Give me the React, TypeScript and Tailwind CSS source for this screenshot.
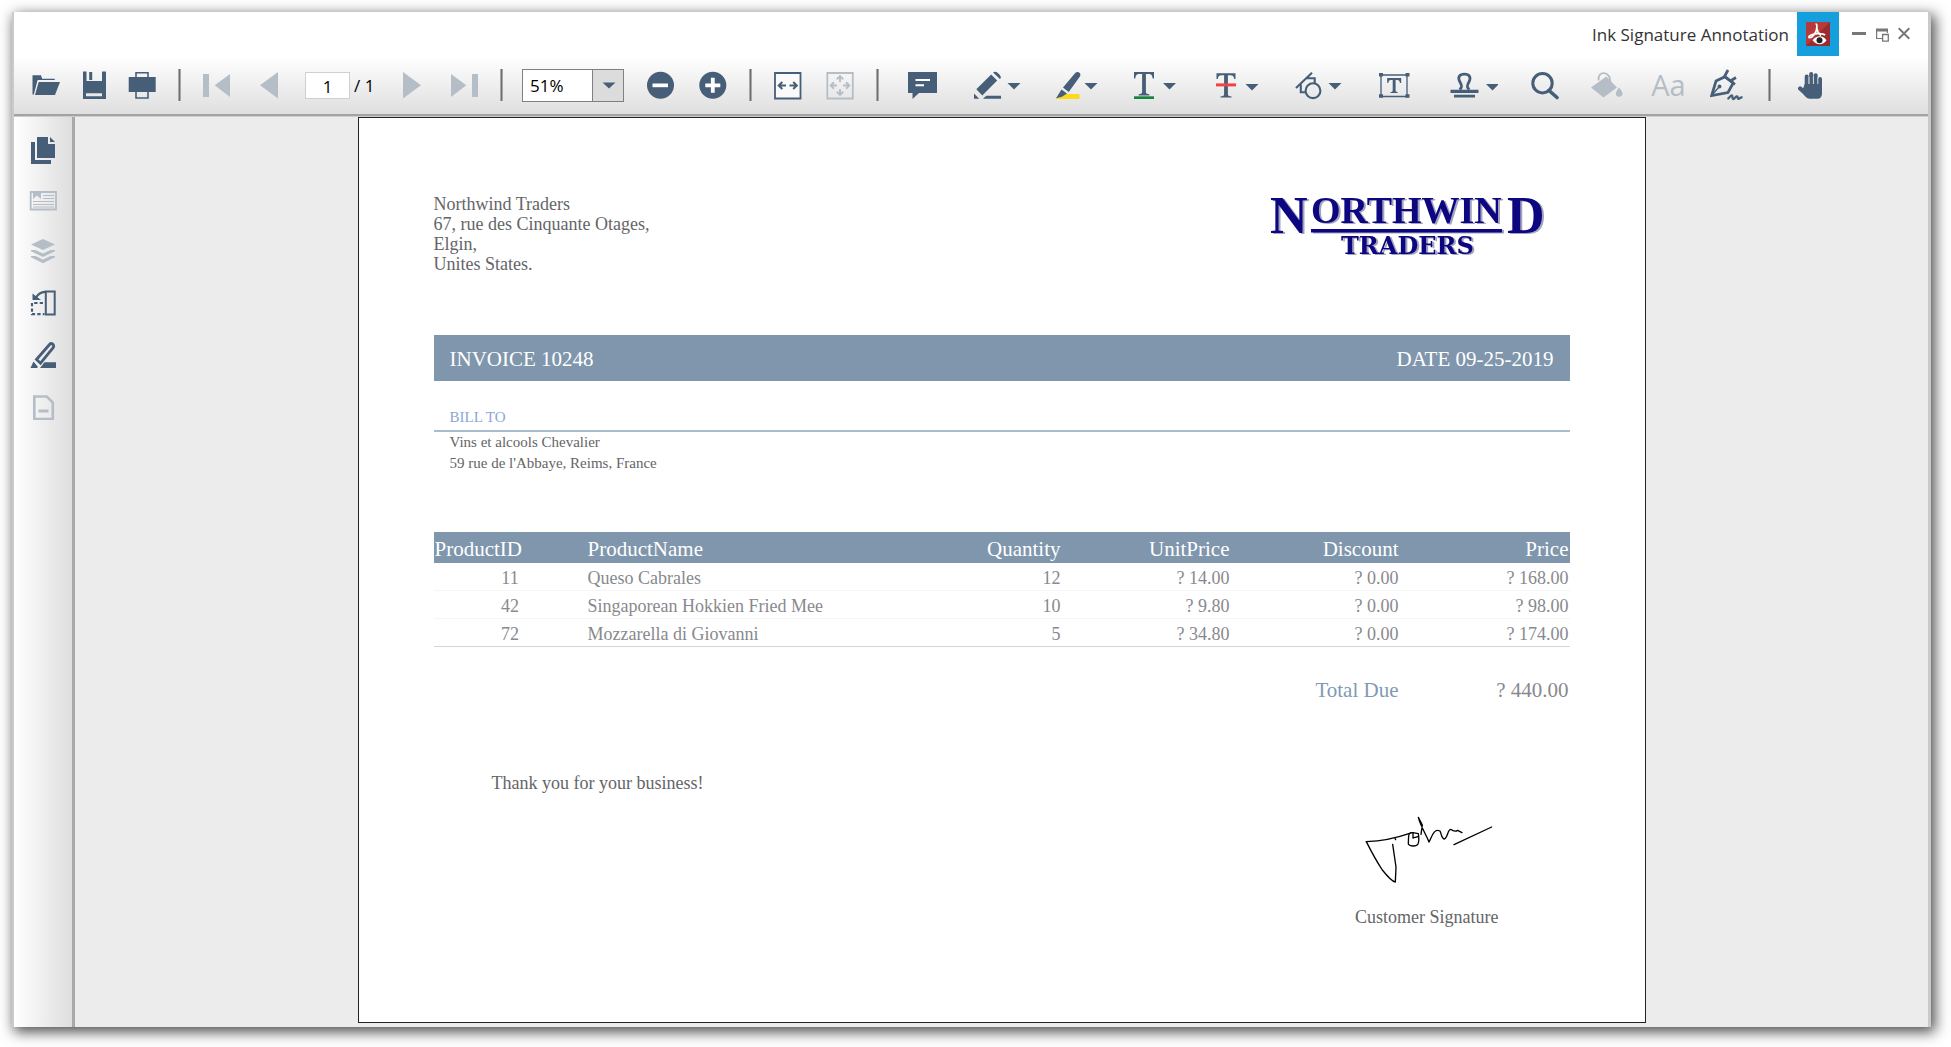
import React, { ReactNode } from "react";

const INK = "#465e77";
const MUTED = "#b5bec6";

type ToolProps = { label: string; w: number; className: string; disabled?: boolean; children: ReactNode };

function Tool({ label, w, className, disabled, children }: ToolProps) {
  return (
    <button
      type="button"
      aria-label={label}
      title={label}
      disabled={disabled}
      className={`block shrink-0 ${disabled ? "text-[#b5bec6]" : "text-[#465e77]"} ${className}`}
    >
      <svg width={w} height="32" viewBox={`0 0 ${w} 32`} fill="currentColor" aria-hidden="true" className="block">
        {children}
      </svg>
    </button>
  );
}

function Separator({ className }: { className: string }) {
  return <div className={`h-8 w-[3px] shrink-0 border-x border-x-[#a8a8a8] bg-[#707070] ${className}`} />;
}

function Caret({ x, y = 14 }: { x: number; y?: number }) {
  return <path d={`M${x} ${y}h13l-6.5 6.5z`} />;
}

function Toolbar() {
  return (
    <div
      role="toolbar"
      aria-label="Document tools"
      className="flex h-[58px] items-center bg-linear-to-b from-white to-[#dfdfdf] pl-[18px]"
    >
      <Tool label="Open" w={28} className="">
        <path d="M.5 6.3H9l1.2 3.5h12.5V11H5.6L1.8 25.5H.5z" />
        <path d="M6.7 13H28l-5 13H3z" />
      </Tool>
      <Tool label="Save" w={23} className="ml-[23px]">
        <path d="M0 2.5h3.5V12H19V2.5h4V30H0zM3 24.3v3h16v-3z" fillRule="evenodd" />
        <path d="M6.2 3h3v8h-3z" />
      </Tool>
      <Tool label="Print" w={28} className="ml-[22px]">
        <path d="M.7 8h27v15h-27z" />
        <path d="M8 8V3.7h12V8M8 23v6h12v-6" fill="none" stroke="currentColor" strokeWidth="1.6" />
      </Tool>
      <Separator className="ml-[22px]" />
      <Tool label="First page" w={27} className="ml-[22px]" disabled>
        <path d="M0 5h6v23H0zM27 5v23L11.7 16.3z" />
      </Tool>
      <Tool label="Previous page" w={18} className="ml-[30px]" disabled>
        <path d="M18 3v26.5L0 16.2z" />
      </Tool>
      <input
        aria-label="Current page"
        defaultValue="1"
        className="ml-[27px] h-[27px] w-[45px] shrink-0 border border-[#cfcfcf] bg-white pt-0.5 text-center font-['Open_Sans',sans-serif] text-[17px] text-black outline-none"
      />
      <span className="ml-1 w-[22px] shrink-0 whitespace-nowrap pt-0.5 font-['Open_Sans',sans-serif] text-[17px] text-black">/ 1</span>
      <Tool label="Next page" w={18} className="ml-[27px]" disabled>
        <path d="M0 3v26.5l18-13.3z" />
      </Tool>
      <Tool label="Last page" w={27} className="ml-[30px]" disabled>
        <path d="M21 5h6v23h-6zM0 5v23l15.3-11.7z" />
      </Tool>
      <Separator className="ml-[22px]" />
      <div className="relative ml-[19px] h-[33px] w-[102px] shrink-0">
        <select
          aria-label="Zoom level"
          defaultValue="51"
          className="h-full w-full appearance-none border border-[#808080] bg-linear-to-r from-white from-[70px] to-[#dcdcdc] to-[70px] pt-0.5 pl-[7px] font-['Open_Sans',sans-serif] text-[17px] text-black outline-none"
        >
          <option value="51">51%</option>
          <option value="100">100%</option>
        </select>
        <svg
          className="pointer-events-none absolute top-0 right-0"
          width="32"
          height="33"
          viewBox="0 0 32 33"
          aria-hidden="true"
        >
          <path d="M.5 0v33" stroke="#808080" />
          <path d="M10.5 13.5h13L17 19.5z" fill={INK} />
        </svg>
      </div>
      <Tool label="Zoom out" w={28} className="ml-[23px]">
        <circle cx="13.5" cy="16.3" r="13.5" />
        <path d="M5.5 14.5h15.5v3.7H5.5z" fill="#fff" />
      </Tool>
      <Tool label="Zoom in" w={28} className="ml-6">
        <circle cx="13.8" cy="16.3" r="13.5" />
        <path d="M11.9 8.8h3.8v5.6h5.6v3.8h-5.6v5.6h-3.8v-5.6H6.3v-3.8h5.6z" fill="#fff" />
      </Tool>
      <Separator className="ml-[22px]" />
      <Tool label="Fit width" w={28} className="ml-[22px]">
        <path d="M1 4h25.5v25.5H1z" fill="#fafafa" stroke="currentColor" strokeWidth="1.8" />
        <path d="M4.5 16.5H12M8.3 13l-3.6 3.5L8.3 20M23 16.5h-7.5M19.2 13l3.6 3.5-3.6 3.5" fill="none" stroke="currentColor" strokeWidth="2" />
      </Tool>
      <Tool label="Fit page" w={28} className="ml-6" disabled>
        <path d="M1.3 4h25.5v25.5H1.3z" fill="none" stroke="currentColor" strokeWidth="1.8" />
        <path d="M4.5 16.5H11M8 13.3l-3.3 3.2L8 19.7M23.5 16.5H17M20 13.3l3.3 3.2-3.3 3.2M14 7v6M10.8 10.3L14 7l3.2 3.3M14 26v-6M10.8 22.7L14 26l3.2-3.3" fill="none" stroke="currentColor" strokeWidth="1.9" />
      </Tool>
      <Separator className="ml-[22px]" />
      <Tool label="Sticky note" w={29} className="ml-[29px]">
        <path d="M0 3h29v21H11l-6.5 6V24H0z" />
        <path d="M7.5 10h14.5v2H7.5zM7.5 15.3h8.5v2H7.5z" fill="#fff" />
      </Tool>
      <Tool label="Ink" w={47} className="ml-[37px]">
        <path d="M2.3 20.3L17.2 5.4l6 6L8.3 26.5zM0 24.5L5.2 29.8H0zM19 3.6l1.3-.7c1.6-.7 2.8.3 4.3 1.8s2.6 2.8 2.2 4.3L25.9 10zM10.5 28.3l2-1.5H27v3H9z" />
        <Caret x={33.5} />
      </Tool>
      <Tool label="Highlight" w={43} className="ml-[34px]">
        <path d="M7 25h17.5v5H0z" fill="#fcd91c" />
        <path d="M8 18.5L20 4.3c1.4-1.6 3.3-1.7 4.5-.6 1.3 1.2 1.2 2.9-.1 4.5L13.7 23zM6.5 20.5l5.5 4-5 3.3-6 1.5z" />
        <Caret x={29.5} />
      </Tool>
      <Tool label="Underline" w={43} className="ml-9">
        <path d="M0 3h20v6.5h-1.3c-.6-3.3-1.4-4.4-4-4.4h-2.8v18c0 1.6.8 2 3.5 2.1v1.3H4.6v-1.3c2.7-.1 3.5-.5 3.5-2.1v-18H5.3c-2.6 0-3.4 1.1-4 4.4H0z" />
        <path d="M0 27.3h20V30H0z" fill="#16863f" />
        <Caret x={29} />
      </Tool>
      <Tool label="Strikethrough" w={43} className="ml-[39px]">
        <path d="M.5 4.2h19V10h-1.3c-.5-2.8-1.3-3.8-3.8-3.8h-2.5v19c0 1.6.8 2 3.5 2.1v1.3H4.6v-1.3c2.7-.1 3.5-.5 3.5-2.1v-19H5.6c-2.5 0-3.3 1-3.8 3.8H.5z" />
        <path d="M0 14.4h20v3H0z" fill="#f04245" />
        <Caret x={29.5} y={15} />
      </Tool>
      <Tool label="Shapes" w={47} className="ml-9">
        <g fill="none" stroke="currentColor" strokeWidth="2.1">
          <circle cx="18" cy="21.7" r="7.4" />
          <path d="M1 19L17 3.8M5.8 15.5v7.7h4.7M11.5 9.2h8.2v5.2" />
        </g>
        <Caret x={33.5} />
      </Tool>
      <Tool label="Text box" w={32} className="ml-9">
        <path d="M3 6h26v21.5H3z" fill="none" stroke="currentColor" strokeWidth="1.3" />
        <path d="M1 4h4v3.6H1zM27.5 4h4v3.6h-4zM1 25.3h4v3.4H1zM27.5 25.3h4v3.4h-4zM9.2 9h14v5H22c-.4-2.3-.9-3.1-2.7-3.1h-1.7v10.6c0 1.1.6 1.4 2 1.5v1h-7v-1c1.5-.1 2.1-.4 2.1-1.5V10.9h-1.8c-1.8 0-2.2.8-2.6 3.1H9.2z" />
      </Tool>
      <Tool label="Stamp" w={48} className="ml-10">
        <path d="M9.5 20.5c3.2-2 2.3-4.3.6-7.2C7 8 9.7 5.2 14.4 5.2s7.3 2.8 4.4 8.1c-1.7 2.900-2.6 5.200.6 7.200" fill="none" stroke="currentColor" strokeWidth="2.8" />
        <path d="M.5 20.800h28v3.200H.5zM4 25.700h21v2.800H4z" />
        <Caret x={36} y={15} />
      </Tool>
      <Tool label="Search" w={28} className="ml-[33px]">
        <path d="M11.500 4.500a9.700 9.700 0 100 19.400 9.700 9.700 0 000-19.400z" fill="none" stroke="currentColor" strokeWidth="3" />
        <path d="M18 21.500l8 7" stroke="currentColor" strokeWidth="3.6" strokeLinecap="round" />
      </Tool>
      <Tool label="Fill" w={32} className="ml-8" disabled>
        <path d="M0 18.500L15.300 7.500 26 18.500 12.500 28.500zM28 18.500c2.500 3.200 3.500 4.800 3.500 6a3.300 3.300 0 01-6.600 0c0-1.200.8-2.800 3.100-6z" />
        <path d="M7.500 11.500C7 6 10 4 13 4.200c4 .3 6.500 4 6.500 11" fill="none" stroke="currentColor" strokeWidth="1.8" />
      </Tool>
      <button
        type="button"
        disabled
        aria-label="Font"
        className="ml-7 w-[35px] shrink-0 whitespace-nowrap font-['Open_Sans',sans-serif] text-[29px] leading-8 text-[#b5bec6]"
      >
        Aa
      </button>
      <Tool label="Signature" w={33} className="ml-6">
        <g fill="none" stroke="currentColor" strokeWidth="2.7">
          <path d="M1.700 26.500L6 12l9-4.300 8.200 6.300-5.200 9.500z" />
          <path d="M13.800 7l11.200 8.500M14.500 7.500L18 1M19.500 12.500l6.500-4" />
          <path d="M2 26l7-8" strokeWidth="1.4" />
          <path d="M17.500 30c2-1 3-3.800 4.300-3.600 1.500.3-.2 3.400 1.300 3.600 1.700.2 2.400-3.200 3.900-2.600 1.300.5.1 2.200 1.300 2.400 1.400.2 1.700-1.800 4.200-1.300" strokeWidth="2.3" />
        </g>
        <circle cx="9.500" cy="17.500" r="1.9" />
      </Tool>
      <Separator className="ml-[25px]" />
      <Tool label="Pan" w={24} className="ml-[27px]">
        <g fill="none" stroke="currentColor" strokeWidth="4" strokeLinecap="round">
          <path d="M8.700 18V7.500M13.200 16V5M17.700 16V6.200M22 20V10" />
          <path d="M2.200 19.500l6 5.500" strokeWidth="4.400" />
        </g>
        <path d="M6.700 15h17.300v9c0 4-1.800 5.800-5 5.800h-7c-2.500 0-3.600-1-5.500-3.200L4 22.500z" />
        <path d="M11 8v7M15.400 7v8M19.900 8v7" stroke="#f0f0f0" strokeWidth=".7" />
      </Tool>
    </div>
  );
}

function TitleBar() {
  return (
    <header className="flex h-11 items-center justify-end bg-white pr-[18px]">
      <h1 className="pt-0.5 font-['Open_Sans',sans-serif] text-[17px] text-[#333]">Ink Signature Annotation</h1>
      <div className="ml-2 flex h-11 w-[42px] items-center justify-center bg-[#169fdd]">
        <svg width="24" height="24" viewBox="0 0 24 24" aria-hidden="true">
          <path d="M0 0h24v24H0z" fill="#b73a3a" />
          <path d="M24 0v24H0z" fill="#9b2c2d" />
          <g fill="none" stroke="#fff" strokeWidth="1.7">
            <path d="M9.500 2c2 0 1.300 2 1.200 4.500C10.500 10 6.500 16.500 3 15.500c-1-2 4-3.500 8-3.800 3-.2 7 .3 8 1.500" />
            <path d="M10.700 6c.5 3.500 2.300 6 4.300 7.500" />
          </g>
          <path d="M6.500 18.300c4-5.300 10.500-5.300 14 0-3.500 5.300-10 5.300-14 0z" fill="#fff" />
          <circle cx="13.500" cy="18.300" r="3" fill="#222" />
        </svg>
      </div>
      <button type="button" aria-label="Minimize" className="ml-[13px] text-[#777]">
        <svg width="14" height="16" viewBox="0 0 14 16" className="block" aria-hidden="true">
          <path d="M0 6h14v3H0z" fill="currentColor" />
        </svg>
      </button>
      <button type="button" aria-label="Restore" className="ml-2.5 text-[#777]">
        <svg width="13" height="16" viewBox="0 0 13 16" className="block" fill="none" stroke="currentColor" aria-hidden="true">
          <path d="M6 12.500H.6V3.500h10.800V7" strokeWidth="1.2" />
          <path d="M0 4h12" strokeWidth="3" />
          <path d="M6.600 8.500h5.700v6.700H6.600z" strokeWidth="1.3" />
        </svg>
      </button>
      <button type="button" aria-label="Close" className="ml-[9px] text-[#777]">
        <svg width="12" height="16" viewBox="0 0 12 16" className="block" fill="none" stroke="currentColor" strokeWidth="2" aria-hidden="true">
          <path d="M.7 2.200l10.600 10.600M11.300 2.200L.7 12.800" />
        </svg>
      </button>
    </header>
  );
}

const panels: { label: string; color: string; icon: ReactNode }[] = [
  {
    label: "Page thumbnails",
    color: INK,
    icon: (
      <>
        <path d="M2 5h4v18h16v4H2z" />
        <path d="M8 0h11v7h7v14H8z" />
        <path d="M21 0l5 5h-5z" />
      </>
    ),
  },
  {
    label: "Bookmarks",
    color: MUTED,
    icon: (
      <>
        <path d="M1.700 4h25.300v17.500H1.700z" fill="none" stroke="currentColor" strokeWidth="1.8" />
        <path d="M4 3h8v8L8 7.500 4 11z" />
        <path d="M14 7.500h11M14 10.500h11M4 13.500h21M4 16.500h21M4 19h21" stroke="currentColor" strokeWidth="1" />
      </>
    ),
  },
  {
    label: "Layers",
    color: MUTED,
    icon: (
      <>
        <path d="M2 5.500L14 0l12 5.500L14 11z" />
        <path d="M2 11h4.500l7.500 3.500 7.500-3.500H26v1.200L14 18 2 12.200zM2 17h4.500l7.500 3.500 7.500-3.500H26v1.200L14 24.200 2 18.200z" />
      </>
    ),
  },
  {
    label: "Organize pages",
    color: INK,
    icon: (
      <>
        <path d="M16.800 1.500h8.900v23h-8.900z" fill="none" stroke="currentColor" strokeWidth="2" />
        <path d="M14 13H3v11.200h12.500" fill="none" stroke="currentColor" strokeWidth="2.2" strokeDasharray="3.300 2.200" />
        <path d="M3.500 3.500L12 10H3.500z" />
        <path d="M7 7.500c2-3.500 5-5.500 9-5.700" fill="none" stroke="currentColor" strokeWidth="2.2" />
      </>
    ),
  },
  {
    label: "Annotations",
    color: INK,
    icon: (
      <>
        <path d="M7.500 18.500L20.500 3.500c1-1.100 2.400-1 3.400-.1s1.100 2.300.1 3.400L11.500 22.200z" fill="none" stroke="currentColor" strokeWidth="2.8" />
        <path d="M4.500 20.500l4.500 5.500-1 1H1.500zM15.500 21.300H27V27H11z" />
      </>
    ),
  },
  {
    label: "Redaction",
    color: MUTED,
    icon: (
      <>
        <path d="M5.300 4.500h12.500l6 6v16.500H5.300z" fill="none" stroke="currentColor" strokeWidth="2.6" />
        <path d="M9.500 17.500h10v3h-10z" />
      </>
    ),
  },
];

function SideBar() {
  return (
    <nav
      aria-label="Panels"
      className="flex w-[61px] shrink-0 flex-col gap-[23px] border-r-3 border-r-[#a9a9a9] bg-linear-to-r from-white to-[#dedede] pt-5 pl-[15px]"
    >
      {panels.map((p) => (
        <button key={p.label} type="button" aria-label={p.label} title={p.label} className="block size-7">
          <svg width="28" height="28" viewBox="0 0 28 28" fill="currentColor" color={p.color} className="block" aria-hidden="true">
            {p.icon}
          </svg>
        </button>
      ))}
    </nav>
  );
}

function Logo() {
  return (
    <svg
      width="292"
      height="92"
      viewBox="0 -20 292 92"
      role="img"
      aria-label="Northwind Traders"
      className="-mt-5 drop-shadow-[2px_1px_0_#a3a3bd]"
    >
      <g fill="#0c0680" fontFamily="'Liberation Serif', serif" fontWeight="700">
        <text x="2" y="39" fontSize="52">N</text>
        <text x="43" y="29" fontSize="38">ORTHWIN</text>
        <text x="239" y="39" fontSize="52">D</text>
        <text x="73" y="60" fontSize="24" fontFamily="'DejaVu Serif', serif">TRADERS</text>
      </g>
      <path d="M43 35h191v3.500H43z" fill="#0c0680" />
    </svg>
  );
}

const rows = [
  ["11", "Queso Cabrales", "12", "? 14.00", "? 0.00", "? 168.00"],
  ["42", "Singaporean Hokkien Fried Mee", "10", "? 9.80", "? 0.00", "? 98.00"],
  ["72", "Mozzarella di Giovanni", "5", "? 34.80", "? 0.00", "? 174.00"],
];

function Invoice() {
  return (
    <article className="mb-1 w-full max-w-[1288px] flex-1 border border-[#222] bg-white px-[75px] pt-[76px] font-['Liberation_Serif',serif] text-lg text-[#646567]">
      <div className="flex h-20 items-start justify-between">
        <address className="leading-5 not-italic">
          Northwind Traders
          <br />
          67, rue des Cinquante Otages,
          <br />
          Elgin,
          <br />
          Unites States.
        </address>
        <div className="mr-2.5">
          <Logo />
        </div>
      </div>

      <div className="mt-[61px] flex h-[46px] items-center justify-between bg-[#7f96ad] px-4 pt-0.5 text-[21px] text-white">
        <h2>INVOICE 10248</h2>
        <p>DATE 09-25-2019</p>
      </div>

      <section className="text-[15px]">
        <h3 className="border-b-2 border-[#a9bccd] px-4 pt-[26px] pb-[3px] leading-5 text-[#8ba6d6]">BILL TO</h3>
        <p className="px-4 leading-[21px]">
          Vins et alcools Chevalier
          <br />
          59 rue de l'Abbaye, Reims, France
        </p>
      </section>

      <table className="mt-[58px] w-full table-fixed border-separate border-spacing-0 text-right text-[#88898e]">
        <colgroup>
          <col className="w-[153px]" />
          <col />
          <col className="w-[169px]" />
          <col className="w-[169px]" />
          <col className="w-[169px]" />
          <col className="w-[170px]" />
        </colgroup>
        <thead className="bg-[#7f96ad] text-[21px] text-white">
          <tr className="h-[31px] leading-7">
            <th scope="col" className="px-px pt-[3px] text-left font-normal">ProductID</th>
            <th scope="col" className="px-px pt-[3px] text-left font-normal">ProductName</th>
            <th scope="col" className="px-px pt-[3px] font-normal">Quantity</th>
            <th scope="col" className="px-px pt-[3px] font-normal">UnitPrice</th>
            <th scope="col" className="px-px pt-[3px] font-normal">Discount</th>
            <th scope="col" className="px-px pt-[3px] font-normal">Price</th>
          </tr>
        </thead>
        <tbody>
          {rows.map((r, i) => (
            <tr key={r[0]} className="h-[27px] leading-6">
              {r.map((cell, j) => (
                <td
                  key={j}
                  className={`border-b px-px pt-[3px] ${i === rows.length - 1 ? "border-[#d4d5d6]" : "border-[#f6f6f6]"} ${
                    j === 0 ? "text-center" : j === 1 ? "text-left" : "text-right"
                  }`}
                >
                  {cell}
                </td>
              ))}
            </tr>
          ))}
        </tbody>
        <tfoot>
          <tr className="h-[86px] text-[21px]">
            <th scope="row" colSpan={5} className="px-px font-normal text-[#7f9ab3]">Total Due</th>
            <td className="px-px">? 440.00</td>
          </tr>
        </tfoot>
      </table>

      <p className="mt-[38px] pl-[58px] leading-6">Thank you for your business!</p>

      <div className="mt-5 flex justify-end pr-[71px]">
        <figure className="flex flex-col items-center">
          <svg
            width="130"
            height="69"
            viewBox="75 50 390 207"
            fill="none"
            stroke="#000"
            strokeWidth="4"
            strokeLinecap="round"
            strokeLinejoin="round"
            role="img"
            aria-label="Signature of John"
            className="ml-1"
          >
            <path d="M82 130C130 128 175 118 212 105l5-2M170 124l-2-5" />
            <path d="M82 130c12 24 28 55 48 85 16 20 30 35 39 36l2-45-10-68" />
            <path d="M222 103c-15-1-13 5-14 34 5 8 25 8 29 0 4-10 2-25 1-31l-16-3v16c6-2 12-2 16-5" />
            <path d="M246 108l4-28-12-23c8 30 22 48 32 74 8-14 14-42 33-33 5 10 4 22 12 24 12-2 10-28 20-29 8 6 15 7 21 3l13 7" />
            <path d="M345 139l113-53" />
          </svg>
          <figcaption className="mt-[21px] leading-6">Customer Signature</figcaption>
        </figure>
      </div>
    </article>
  );
}

export default function App() {
  return (
    <div className="flex min-h-screen flex-col bg-white pt-3 pr-5 pb-5 pl-3">
      <div className="flex flex-1 flex-col border-r-3 border-l-2 border-[#cacaca] bg-white shadow-[3px_4px_13px_1px_rgba(0,0,0,0.7)]">
        <TitleBar />
        <Toolbar />
        <div className="h-[3px] border-b border-b-[#cdcdcd] bg-[#a3a3a3]" />
        <div className="flex flex-1">
          <SideBar />
          <main className="flex min-w-0 flex-1 flex-col items-center bg-[#ececec]">
            <Invoice />
          </main>
        </div>
      </div>
    </div>
  );
}
